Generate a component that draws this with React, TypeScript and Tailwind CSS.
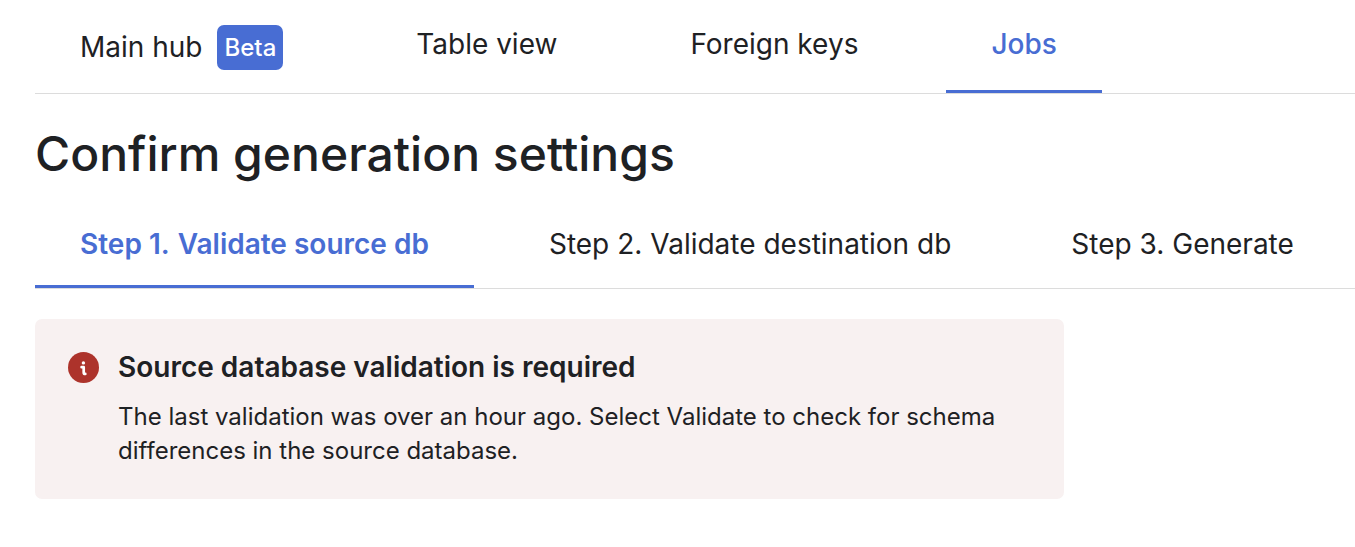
import { useState } from "react";
import clsx from "clsx";

const TABS = [
  { id: "hub", label: "Main hub", badge: "Beta" },
  { id: "table", label: "Table view" },
  { id: "keys", label: "Foreign keys" },
  { id: "jobs", label: "Jobs" },
];

const STEPS = ["Validate source db", "Validate destination db", "Generate"];

function InfoIcon() {
  return (
    <svg viewBox="0 0 31 31" className="mt-1 size-[31px] shrink-0" aria-hidden="true">
      <circle cx="15.5" cy="15.5" r="15.5" fill="#ad332b" />
      <circle cx="15.4" cy="10.9" r="1.7" fill="#fff" />
      <path
        d="M13.6 15.2h2.1v5.2c0 1 .5 1.5 1.6 1.5"
        fill="none"
        stroke="#fff"
        strokeWidth="2.7"
        strokeLinecap="round"
        strokeLinejoin="round"
      />
    </svg>
  );
}

export default function App() {
  const [tab, setTab] = useState("jobs");
  const [step, setStep] = useState(0);

  return (
    <div className="overflow-x-hidden bg-white pb-12 pl-[35px] font-['Inter',sans-serif] text-[#1e2124]">
      {/* Main tabs */}
      <nav className="flex gap-[43px] border-b border-[#dcdcdc] pt-[25px]">
        {TABS.map(({ id, label, badge }) => (
          <button
            key={id}
            type="button"
            onClick={() => setTab(id)}
            className={clsx(
              "flex shrink-0 items-start border-b-3 px-[45px] pb-5 text-[28px] leading-[39px]",
              tab === id ? "border-[#486dd3] font-medium text-[#486dd3]" : "border-transparent"
            )}
          >
            <span className="flex items-center gap-[15px]">
              {label}
              {badge && (
                <span className="rounded-[7px] bg-[#486dd3] px-[7px] text-2xl leading-[45px] font-medium text-white">
                  {badge}
                </span>
              )}
            </span>
          </button>
        ))}
      </nav>

      <h1 className="mt-[26px] text-5xl leading-[68px] font-medium">Confirm generation settings</h1>

      {/* Wizard steps */}
      <nav className="mt-[37px] flex gap-[30px] border-b border-[#dcdcdc]">
        {STEPS.map((label, i) => (
          <button
            key={label}
            type="button"
            onClick={() => setStep(i)}
            className={clsx(
              "flex shrink-0 gap-2 border-b-3 px-[45px] pb-[21px] text-[28px] leading-[39px]",
              step === i ? "border-[#486dd3] font-semibold text-[#486dd3]" : "border-transparent"
            )}
          >
            <span>Step {i + 1}.</span>
            <span>{label}</span>
          </button>
        ))}
      </nav>

      {/* Validation notice */}
      <section className="mt-[30px] flex w-full max-w-[1029px] gap-[19px] rounded-[7px] bg-[#f8f1f1] px-[33px] pt-[29px] pb-[31px]">
        <InfoIcon />
        <div>
          <h2 className="text-[28px] leading-[39px] font-semibold">Source database validation is required</h2>
          <p className="mt-[13px] text-2xl leading-[34px]">
            The last validation was over an hour ago. Select Validate to check for schema differences in the source
            database.
          </p>
        </div>
      </section>
    </div>
  );
}
